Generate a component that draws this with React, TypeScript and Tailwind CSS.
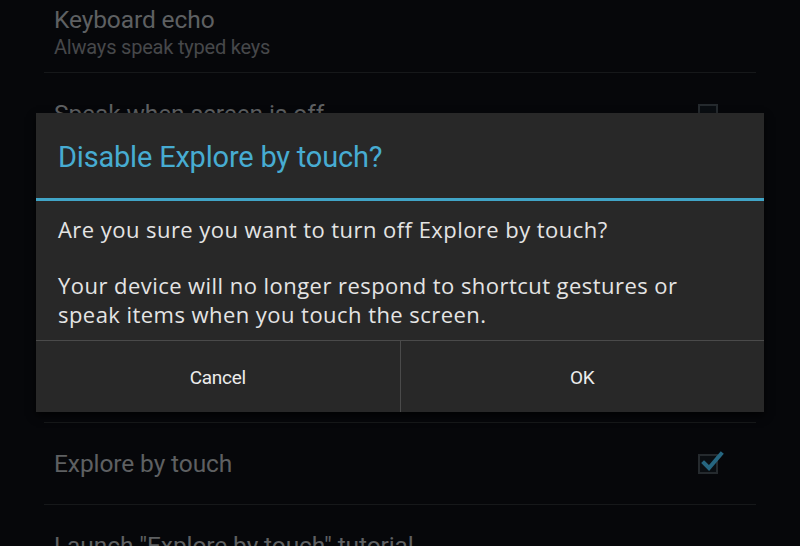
import React from "react";

function Check({ checked }: { checked?: boolean }) {
  return (
    <div className="relative w-[20px] h-[20px] border-2 border-[#252a2e] bg-[#0a0e12]">
      {checked && (
        <svg viewBox="0 0 24 24" className="absolute -top-[6px] left-[0px] w-[24px] h-[24px]">
          <path d="M4 13 L9 18 L21 4" fill="none" stroke="#266680" strokeWidth="4" strokeLinecap="square" />
        </svg>
      )}
    </div>
  );
}

function Row({ title, summary, h, checkbox, checked }: { title: string; summary?: string; h: number; checkbox?: boolean; checked?: boolean }) {
  return (
    <div className="flex items-center justify-between border-b border-[#16181a] pl-[10px] pr-[38px]" style={{ height: h }}>
      <div className="flex flex-col">
        <div className="text-[24.5px] leading-[28px] text-[#5e6062] tracking-[-0.1px]" style={{ fontFamily: "Roboto, sans-serif" }}>{title}</div>
        {summary && (
          <div className="text-[20px] leading-[22px] text-[#46484a] tracking-[-0.2px] mt-[2px]" style={{ fontFamily: "Roboto, sans-serif" }}>{summary}</div>
        )}
      </div>
      {checkbox && <Check checked={checked} />}
    </div>
  );
}

export default function App() {
  return (
    <div className="relative w-[800px] h-[546px] overflow-hidden bg-[#06070a]">
      <div className="px-[44px] -mt-[9px]">
        <Row title="Keyboard echo" summary="Always speak typed keys" h={82} />
        <Row title="Speak when screen is off" h={82} checkbox />
        <Row title="Use proximity sensor" h={80} checkbox />
        <Row title="Shake to start continuous reading" h={80} checkbox />
        <Row title="Speak caller ID" h={108} checkbox />
        <Row title="Explore by touch" h={82} checkbox checked />
        <Row title={'Launch "Explore by touch" tutorial'} h={82} />
      </div>

      <div className="absolute left-[36px] top-[113px] w-[728px] h-[299px] bg-[#282828] flex flex-col shadow-[0_4px_8px_rgba(0,0,0,0.7)]">
        <div className="h-[85px] flex items-center pl-[22px] pt-[4px]">
          <span className="text-[29px] text-[#47acd2] tracking-[-0.2px]" style={{ fontFamily: "Roboto, sans-serif" }}>
            Disable Explore by touch?
          </span>
        </div>
        <div className="h-[3px] bg-[#41a5c7]" />
        <div className="h-[139px] pl-[22px] pr-[20px] pt-[14px] text-[22px] leading-[29px] tracking-[0.45px] text-[#e4e4e4]" style={{ fontFamily: "'Open Sans', sans-serif" }}>
          <p>Are you sure you want to turn off Explore by touch?</p>
          <p className="mt-[27px]">Your device will no longer respond to shortcut gestures or speak items when you touch the screen.</p>
        </div>
        <div className="h-px bg-[#4a4a4a]" />
        <div className="flex-1 flex">
          <div className="flex-1 flex items-center justify-center pt-[3px] text-[19px] text-[#ececec] tracking-[-0.3px]" style={{ fontFamily: "Roboto, sans-serif" }}>Cancel</div>
          <div className="w-px bg-[#4a4a4a]" />
          <div className="flex-1 flex items-center justify-center pt-[3px] text-[19px] text-[#ececec] tracking-[-0.3px]" style={{ fontFamily: "Roboto, sans-serif" }}>OK</div>
        </div>
      </div>
    </div>
  );
}
